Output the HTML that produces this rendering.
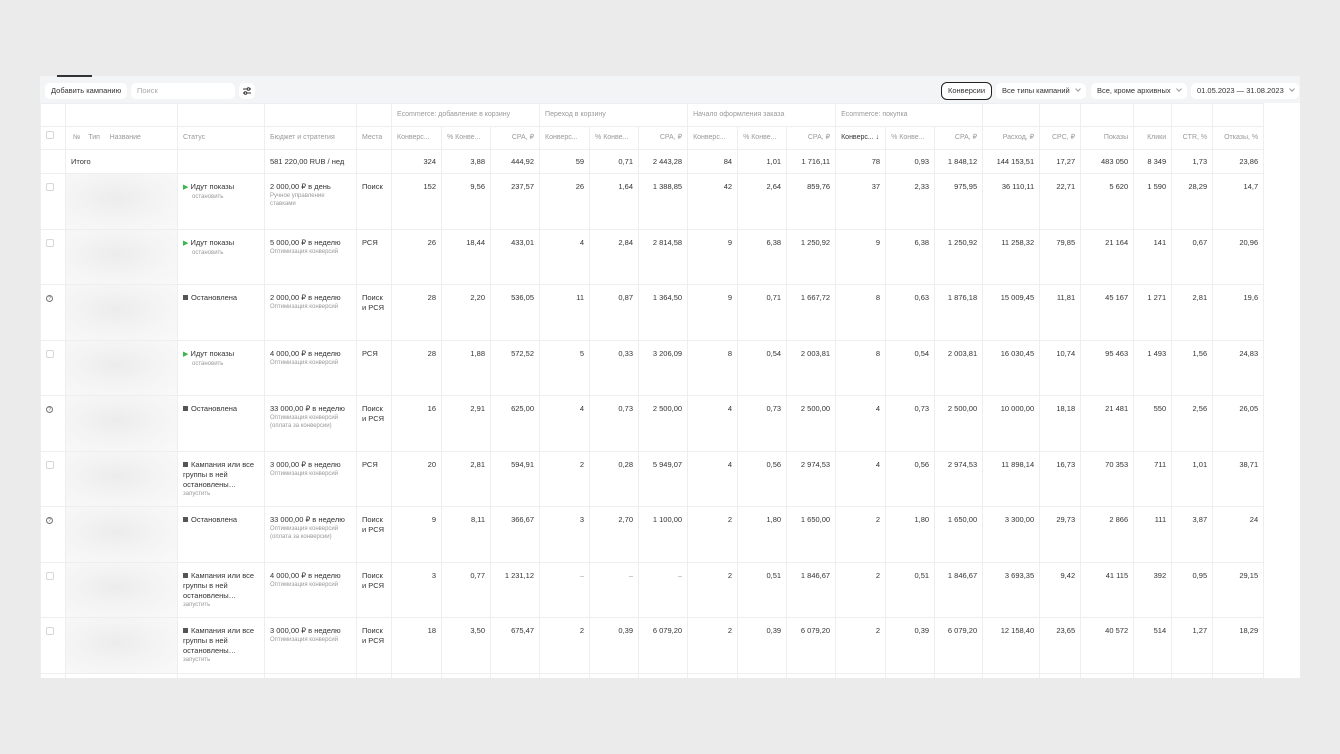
<!DOCTYPE html>
<html><head><meta charset="utf-8"><style>
*{box-sizing:border-box;margin:0;padding:0}
body{width:1340px;height:754px;background:#ebebeb;font-family:"Liberation Sans",sans-serif;position:relative;overflow:hidden;color:#222}
.panel{position:absolute;left:40px;top:76px;width:1260px;height:602px;background:#f3f4f6;overflow:hidden}
.tab{position:absolute;left:57px;top:75px;width:35px;height:2px;background:#333}
.btn{position:absolute;top:83px;height:16px;background:#fff;border-radius:5px;font-size:7.5px;line-height:16px;padding:0 6px;color:#333;white-space:nowrap}
.chev{display:inline-block;width:4px;height:4px;border-right:1px solid #999;border-bottom:1px solid #999;transform:rotate(45deg);margin-left:6px;position:relative;top:-2px}
table{position:absolute;left:0;top:27px;width:1260px;border-collapse:collapse;table-layout:fixed;background:#fff;font-size:7.5px;border-radius:6px 0 0 0}
td{border:1px solid #eceef2;vertical-align:top;padding:0 5px;white-space:nowrap;overflow:hidden;background:#fff}
tr.g td{height:23px;line-height:22px;color:#999;font-size:7px}
tr.h td{height:22px;line-height:22px;color:#999;font-size:7px}
tr.t td{height:23px;line-height:23px;color:#333}
tr.d td{height:55.5px;padding-top:8px;color:#333;line-height:10px}
.r{text-align:right}
.sep{border-left:1.5px solid #c9ccd6!important}
.sub{font-size:6px;color:#999;line-height:8px;white-space:normal}
.cb{display:inline-block;width:8px;height:8px;border:1px solid #d5d7dc;border-radius:2px;margin-top:1px}
.q{display:inline-block;width:7px;height:7px;border:0.7px solid #777;border-radius:50%;font-size:5px;line-height:6px;text-align:center;color:#666;margin-top:1px}
.blur{position:relative;overflow:visible}
.blur i{position:absolute;left:0;right:0;top:0;bottom:0;background:radial-gradient(ellipse at 45% 45%,#ececec 0%,#f4f4f4 50%,#f9f9f9 100%)}
.play{color:#3bb54a;font-size:7px}
.stop{display:inline-block;width:5px;height:5px;background:#555;margin-right:3px}
.st{white-space:normal;padding-left:5px}
.nb{border:none!important}
</style></head><body>
<div class="panel">
<div class="btn" style="left:5px;top:7px">Добавить кампанию</div>
<div class="btn" style="left:91px;top:7px;width:104px;color:#aaa">Поиск</div>
<div class="btn" style="left:199px;top:7px;width:16px;padding:0">
<svg width="16" height="16" viewBox="0 0 16 16"><path d="M4 6h8M4 10h8" stroke="#333" stroke-width="1"/><circle cx="9.5" cy="6" r="1.3" fill="#fff" stroke="#333"/><circle cx="6.5" cy="10" r="1.3" fill="#fff" stroke="#333"/></svg></div>
<div class="btn" style="left:901px;top:6px;height:18px;line-height:16px;border:1.5px solid #222;border-radius:6px">Конверсии</div>
<div class="btn" style="left:956px;top:7px">Все типы кампаний<span class="chev"></span></div>
<div class="btn" style="left:1051px;top:7px">Все, кроме архивных<span class="chev"></span></div>
<div class="btn" style="left:1151px;top:7px;width:108px">01.05.2023 — 31.08.2023<span class="chev"></span></div>
<table>
<colgroup><col style="width:25px"><col style="width:112px"><col style="width:87px"><col style="width:92px"><col style="width:35px"><col style="width:50px"><col style="width:49px"><col style="width:49px"><col style="width:50px"><col style="width:49px"><col style="width:49px"><col style="width:50px"><col style="width:49px"><col style="width:49px"><col style="width:50px"><col style="width:49px"><col style="width:48px"><col style="width:57px"><col style="width:41px"><col style="width:53px"><col style="width:38px"><col style="width:41px"><col style="width:51px"><col style="width:37px"></colgroup>
<tr class="g"><td></td><td></td><td></td><td></td><td></td><td colspan="3">Ecommerce: добавление в корзину</td><td colspan="3">Переход в корзину</td><td colspan="3">Начало оформления заказа</td><td colspan="3">Ecommerce: покупка</td><td></td><td></td><td></td><td></td><td></td><td></td><td class="nb"></td></tr>
<tr class="h"><td><span class="cb"></span></td><td>&nbsp;№&nbsp;&nbsp;&nbsp;&nbsp;Тип&nbsp;&nbsp;&nbsp;&nbsp;&nbsp;Название</td><td>Статус</td><td>Бюджет и стратегия</td><td>Места</td><td>Конверс...</td><td>% Конве...</td><td class="r">CPA, ₽</td><td>Конверс...</td><td>% Конве...</td><td class="r">CPA, ₽</td><td>Конверс...</td><td>% Конве...</td><td class="r">CPA, ₽</td><td style="color:#333">Конверс... ↓</td><td>% Конве...</td><td class="r">CPA, ₽</td><td class="r">Расход, ₽</td><td class="r">CPC, ₽</td><td class="r">Показы</td><td class="r">Клики</td><td class="r">CTR, %</td><td class="r">Отказы, %</td><td class="nb"></td></tr>
<tr class="t"><td></td><td>Итого</td><td></td><td>581 220,00 RUB / нед</td><td></td><td class="r">324</td><td class="r">3,88</td><td class="r">444,92</td><td class="r">59</td><td class="r">0,71</td><td class="r">2 443,28</td><td class="r">84</td><td class="r">1,01</td><td class="r">1 716,11</td><td class="r">78</td><td class="r">0,93</td><td class="r">1 848,12</td><td class="r">144 153,51</td><td class="r">17,27</td><td class="r">483 050</td><td class="r">8 349</td><td class="r">1,73</td><td class="r">23,86</td><td class="nb"></td></tr>

<tr class="d"><td><span class="cb"></span></td><td class="blur"><i></i></td><td class="st"><span class="play">▶</span> Идут показы<div class="sub" style="padding-left:9px">остановить</div></td><td>2 000,00 ₽ в день<div class="sub">Ручное управление ставками</div></td><td style="white-space:normal">Поиск</td><td class="r sep">152</td><td class="r">9,56</td><td class="r">237,57</td><td class="r sep">26</td><td class="r">1,64</td><td class="r">1 388,85</td><td class="r sep">42</td><td class="r">2,64</td><td class="r">859,76</td><td class="r sep">37</td><td class="r">2,33</td><td class="r">975,95</td><td class="r sep">36 110,11</td><td class="r">22,71</td><td class="r">5 620</td><td class="r">1 590</td><td class="r">28,29</td><td class="r">14,7</td><td class="nb"></td></tr>

<tr class="d"><td><span class="cb"></span></td><td class="blur"><i></i></td><td class="st"><span class="play">▶</span> Идут показы<div class="sub" style="padding-left:9px">остановить</div></td><td>5 000,00 ₽ в неделю<div class="sub">Оптимизация конверсий</div></td><td>РСЯ</td><td class="r sep">26</td><td class="r">18,44</td><td class="r">433,01</td><td class="r sep">4</td><td class="r">2,84</td><td class="r">2 814,58</td><td class="r sep">9</td><td class="r">6,38</td><td class="r">1 250,92</td><td class="r sep">9</td><td class="r">6,38</td><td class="r">1 250,92</td><td class="r sep">11 258,32</td><td class="r">79,85</td><td class="r">21 164</td><td class="r">141</td><td class="r">0,67</td><td class="r">20,96</td><td class="nb"></td></tr>

<tr class="d"><td><span class="q">?</span></td><td class="blur"><i></i></td><td class="st"><span class="stop"></span>Остановлена</td><td>2 000,00 ₽ в неделю<div class="sub">Оптимизация конверсий</div></td><td>Поиск<br>и РСЯ</td><td class="r sep">28</td><td class="r">2,20</td><td class="r">536,05</td><td class="r sep">11</td><td class="r">0,87</td><td class="r">1 364,50</td><td class="r sep">9</td><td class="r">0,71</td><td class="r">1 667,72</td><td class="r sep">8</td><td class="r">0,63</td><td class="r">1 876,18</td><td class="r sep">15 009,45</td><td class="r">11,81</td><td class="r">45 167</td><td class="r">1 271</td><td class="r">2,81</td><td class="r">19,6</td><td class="nb"></td></tr>

<tr class="d"><td><span class="cb"></span></td><td class="blur"><i></i></td><td class="st"><span class="play">▶</span> Идут показы<div class="sub" style="padding-left:9px">остановить</div></td><td>4 000,00 ₽ в неделю<div class="sub">Оптимизация конверсий</div></td><td>РСЯ</td><td class="r sep">28</td><td class="r">1,88</td><td class="r">572,52</td><td class="r sep">5</td><td class="r">0,33</td><td class="r">3 206,09</td><td class="r sep">8</td><td class="r">0,54</td><td class="r">2 003,81</td><td class="r sep">8</td><td class="r">0,54</td><td class="r">2 003,81</td><td class="r sep">16 030,45</td><td class="r">10,74</td><td class="r">95 463</td><td class="r">1 493</td><td class="r">1,56</td><td class="r">24,83</td><td class="nb"></td></tr>

<tr class="d"><td><span class="q">?</span></td><td class="blur"><i></i></td><td class="st"><span class="stop"></span>Остановлена</td><td>33 000,00 ₽ в неделю<div class="sub">Оптимизация конверсий (оплата за конверсии)</div></td><td>Поиск<br>и РСЯ</td><td class="r sep">16</td><td class="r">2,91</td><td class="r">625,00</td><td class="r sep">4</td><td class="r">0,73</td><td class="r">2 500,00</td><td class="r sep">4</td><td class="r">0,73</td><td class="r">2 500,00</td><td class="r sep">4</td><td class="r">0,73</td><td class="r">2 500,00</td><td class="r sep">10 000,00</td><td class="r">18,18</td><td class="r">21 481</td><td class="r">550</td><td class="r">2,56</td><td class="r">26,05</td><td class="nb"></td></tr>

<tr class="d"><td><span class="cb"></span></td><td class="blur"><i></i></td><td class="st"><span class="stop"></span>Кампания или все группы в ней остановлены…<div class="sub">запустить</div></td><td>3 000,00 ₽ в неделю<div class="sub">Оптимизация конверсий</div></td><td>РСЯ</td><td class="r sep">20</td><td class="r">2,81</td><td class="r">594,91</td><td class="r sep">2</td><td class="r">0,28</td><td class="r">5 949,07</td><td class="r sep">4</td><td class="r">0,56</td><td class="r">2 974,53</td><td class="r sep">4</td><td class="r">0,56</td><td class="r">2 974,53</td><td class="r sep">11 898,14</td><td class="r">16,73</td><td class="r">70 353</td><td class="r">711</td><td class="r">1,01</td><td class="r">38,71</td><td class="nb"></td></tr>

<tr class="d"><td><span class="q">?</span></td><td class="blur"><i></i></td><td class="st"><span class="stop"></span>Остановлена</td><td>33 000,00 ₽ в неделю<div class="sub">Оптимизация конверсий (оплата за конверсии)</div></td><td>Поиск<br>и РСЯ</td><td class="r sep">9</td><td class="r">8,11</td><td class="r">366,67</td><td class="r sep">3</td><td class="r">2,70</td><td class="r">1 100,00</td><td class="r sep">2</td><td class="r">1,80</td><td class="r">1 650,00</td><td class="r sep">2</td><td class="r">1,80</td><td class="r">1 650,00</td><td class="r sep">3 300,00</td><td class="r">29,73</td><td class="r">2 866</td><td class="r">111</td><td class="r">3,87</td><td class="r">24</td><td class="nb"></td></tr>

<tr class="d"><td><span class="cb"></span></td><td class="blur"><i></i></td><td class="st"><span class="stop"></span>Кампания или все группы в ней остановлены…<div class="sub">запустить</div></td><td>4 000,00 ₽ в неделю<div class="sub">Оптимизация конверсий</div></td><td>Поиск<br>и РСЯ</td><td class="r sep">3</td><td class="r">0,77</td><td class="r">1 231,12</td><td class="r sep" style="color:#999">–</td><td class="r" style="color:#999">–</td><td class="r" style="color:#999">–</td><td class="r sep">2</td><td class="r">0,51</td><td class="r">1 846,67</td><td class="r sep">2</td><td class="r">0,51</td><td class="r">1 846,67</td><td class="r sep">3 693,35</td><td class="r">9,42</td><td class="r">41 115</td><td class="r">392</td><td class="r">0,95</td><td class="r">29,15</td><td class="nb"></td></tr>

<tr class="d"><td><span class="cb"></span></td><td class="blur"><i></i></td><td class="st"><span class="stop"></span>Кампания или все группы в ней остановлены…<div class="sub">запустить</div></td><td>3 000,00 ₽ в неделю<div class="sub">Оптимизация конверсий</div></td><td>Поиск<br>и РСЯ</td><td class="r sep">18</td><td class="r">3,50</td><td class="r">675,47</td><td class="r sep">2</td><td class="r">0,39</td><td class="r">6 079,20</td><td class="r sep">2</td><td class="r">0,39</td><td class="r">6 079,20</td><td class="r sep">2</td><td class="r">0,39</td><td class="r">6 079,20</td><td class="r sep">12 158,40</td><td class="r">23,65</td><td class="r">40 572</td><td class="r">514</td><td class="r">1,27</td><td class="r">18,29</td><td class="nb"></td></tr>
<tr class="d"><td></td><td></td><td></td><td></td><td></td><td class="sep"></td><td></td><td></td><td class="sep"></td><td></td><td></td><td class="sep"></td><td></td><td></td><td class="sep"></td><td></td><td></td><td class="sep"></td><td></td><td></td><td></td><td></td><td></td><td class="nb"></td></tr>
</table>
</div>
<div class="tab"></div>
</body></html>
